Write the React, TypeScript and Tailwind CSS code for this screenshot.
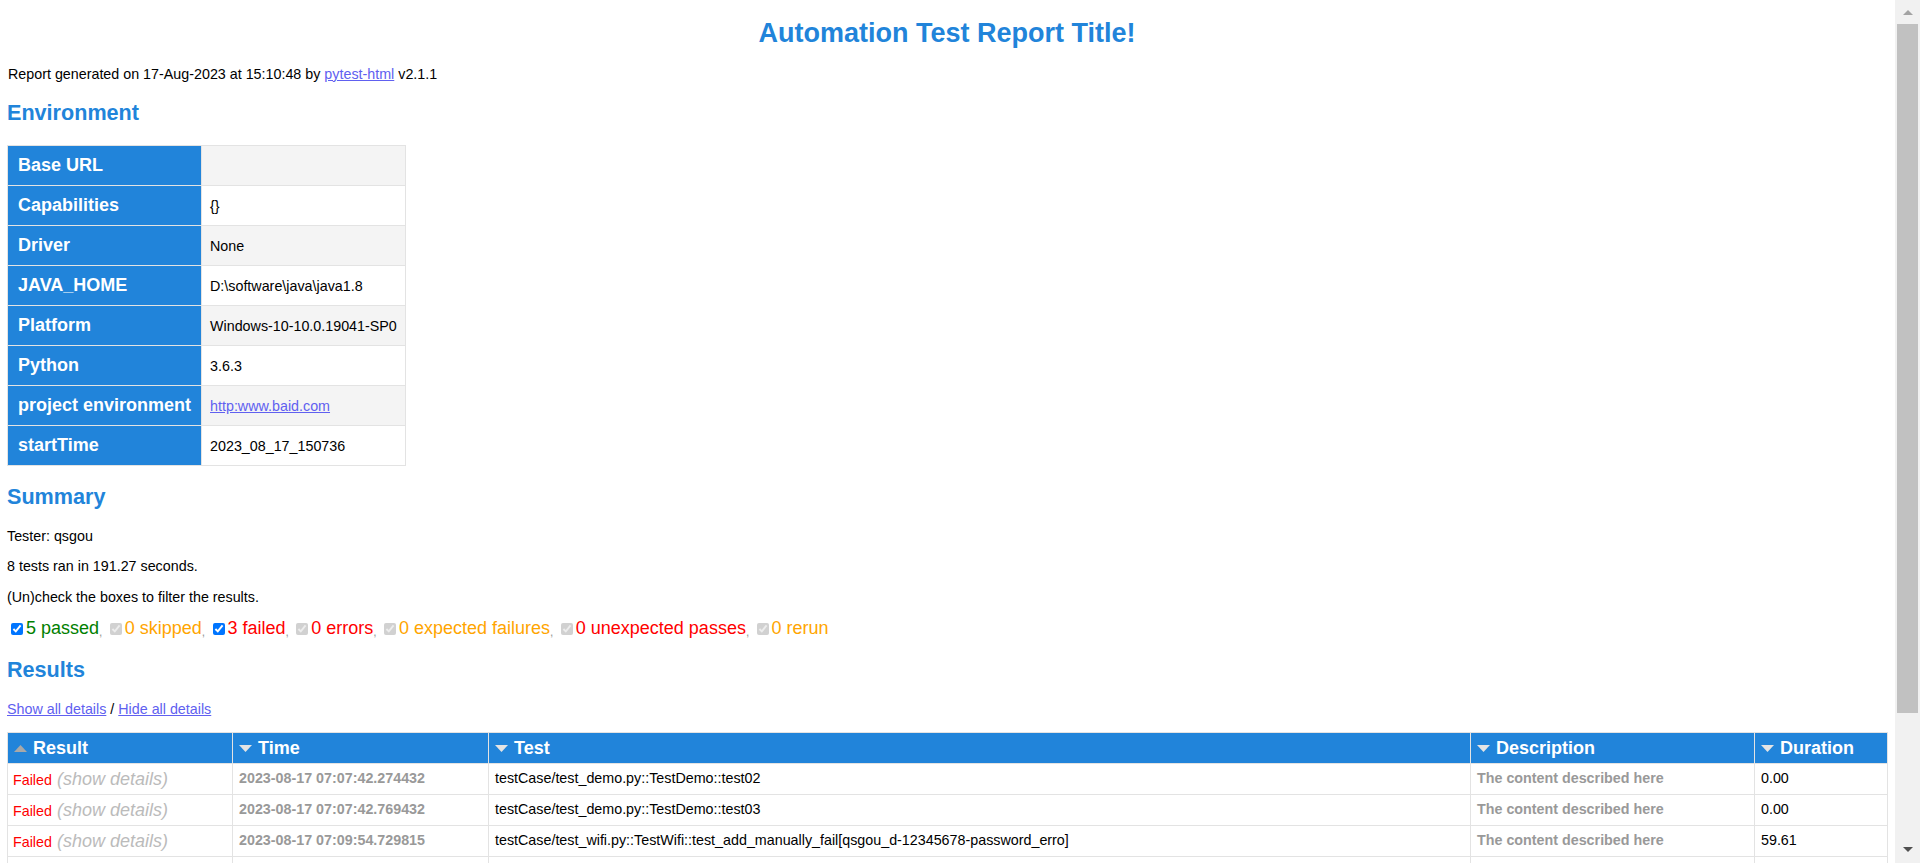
import type { ReactNode } from "react";

type EnvRow = { key: string; value: ReactNode };

type Filter = { count: number; label: string; color: string; on: boolean };

type TestRow = {
  result: "Failed" | "Passed";
  time: string;
  test: string;
  description: string;
  duration: string;
};

const linkCls = "text-[#6060f0] underline";

const environment: EnvRow[] = [
  { key: "Base URL", value: "" },
  { key: "Capabilities", value: "{}" },
  { key: "Driver", value: "None" },
  { key: "JAVA_HOME", value: "D:\\software\\java\\java1.8" },
  { key: "Platform", value: "Windows-10-10.0.19041-SP0" },
  { key: "Python", value: "3.6.3" },
  {
    key: "project environment",
    value: (
      <a href="#" className={linkCls}>
        http:www.baid.com
      </a>
    ),
  },
  { key: "startTime", value: "2023_08_17_150736" },
];

const filters: Filter[] = [
  { count: 5, label: "passed", color: "text-[#008000]", on: true },
  { count: 0, label: "skipped", color: "text-[#ffa500]", on: false },
  { count: 3, label: "failed", color: "text-[#ff0000]", on: true },
  { count: 0, label: "errors", color: "text-[#ff0000]", on: false },
  { count: 0, label: "expected failures", color: "text-[#ffa500]", on: false },
  { count: 0, label: "unexpected passes", color: "text-[#ff0000]", on: false },
  { count: 0, label: "rerun", color: "text-[#ffa500]", on: false },
];

const desc = "The content described here";

const tests: TestRow[] = [
  { result: "Failed", time: "2023-08-17 07:07:42.274432", test: "testCase/test_demo.py::TestDemo::test02", description: desc, duration: "0.00" },
  { result: "Failed", time: "2023-08-17 07:07:42.769432", test: "testCase/test_demo.py::TestDemo::test03", description: desc, duration: "0.00" },
  { result: "Failed", time: "2023-08-17 07:09:54.729815", test: "testCase/test_wifi.py::TestWifi::test_add_manually_fail[qsgou_d-12345678-password_erro]", description: desc, duration: "59.61" },
  { result: "Passed", time: "2023-08-17 07:07:41.803112", test: "testCase/test_demo.py::TestDemo::test01", description: desc, duration: "0.00" },
  { result: "Passed", time: "2023-08-17 07:07:43.102540", test: "testCase/test_demo.py::TestDemo::test04", description: desc, duration: "0.00" },
  { result: "Passed", time: "2023-08-17 07:08:21.554310", test: "testCase/test_wifi.py::TestWifi::test_open_wifi", description: desc, duration: "38.42" },
  { result: "Passed", time: "2023-08-17 07:08:52.918004", test: "testCase/test_wifi.py::TestWifi::test_scan_wifi", description: desc, duration: "31.36" },
  { result: "Passed", time: "2023-08-17 07:10:47.330981", test: "testCase/test_wifi.py::TestWifi::test_add_manually[qsgou_d-12345678]", description: desc, duration: "52.60" },
];

const columns = [
  { label: "Result", w: "w-[225px]", asc: true },
  { label: "Time", w: "w-[256px]", asc: false },
  { label: "Test", w: "w-[982px]", asc: false },
  { label: "Description", w: "w-[284px]", asc: false },
  { label: "Duration", w: "w-[133px]", asc: false },
];

// petit triangle de tri dans l'en-tête
function SortArrow({ asc }: { asc: boolean }) {
  return (
    <svg width="13" height="7" viewBox="0 0 13 7" className="shrink-0">
      {asc ? (
        <polygon points="0,7 6.5,0 13,7" fill="#a8a8a8" />
      ) : (
        <polygon points="0,0 13,0 6.5,7" fill="#e4e4e4" />
      )}
    </svg>
  );
}

function Heading({ children, className }: { children: ReactNode; className: string }) {
  return (
    <h2 className={`h-[25px] flex items-center text-[21.6px] font-bold text-[#2184da] ${className}`}>
      {children}
    </h2>
  );
}

function Line({ children, className }: { children: ReactNode; className: string }) {
  return <p className={`h-[17px] flex items-center text-[14.3px] text-black ${className}`}>{children}</p>;
}

function Scrollbar() {
  return (
    <div className="w-[25px] shrink-0 h-full bg-[#f1f1f1] flex flex-col items-center">
      <div className="h-[24px] flex items-center justify-center">
        <svg width="10" height="5" viewBox="0 0 10 5">
          <polygon points="0,5 5,0 10,5" fill="#a3a3a3" />
        </svg>
      </div>
      <div className="w-[21px] h-[689px] bg-[#c1c1c1]" />
      <div className="flex-1" />
      <div className="h-[27px] flex items-center justify-center">
        <svg width="10" height="5" viewBox="0 0 10 5">
          <polygon points="0,0 10,0 5,5" fill="#505050" />
        </svg>
      </div>
    </div>
  );
}

export default function App() {
  return (
    <div className="flex h-[863px] overflow-hidden bg-white font-['Liberation_Sans',Arial,sans-serif]">
      <main className="flex-1 min-w-0 pl-[7px] pr-[8px]">
        {/* Titre */}
        <h1 className="mt-[17px] h-[32px] flex items-center justify-center text-[27px] font-bold text-[#2184da]">
          Automation Test Report Title!
        </h1>

        <Line className="mt-[17px] pl-px">
          Report generated on 17-Aug-2023 at 15:10:48 by&nbsp;
          <a href="#" className={linkCls}>
            pytest-html
          </a>
          &nbsp;v2.1.1
        </Line>

        {/* Environment */}
        <Heading className="mt-[18px]">Environment</Heading>
        <table className="mt-[19px] border-collapse">
          <tbody>
            {environment.map((row, i) => (
              <tr key={row.key} className="h-[40px]">
                <td className="border border-[#e3e3e3] bg-[#2184da] px-[10px] text-[18px] font-bold text-white whitespace-nowrap">
                  {row.key}
                </td>
                <td
                  className={`border border-[#e3e3e3] pl-[8px] pr-[8px] pt-[3px] text-[14.3px] text-black whitespace-nowrap ${
                    i % 2 === 0 ? "bg-[#f4f4f4]" : "bg-white"
                  }`}
                >
                  {row.value}
                </td>
              </tr>
            ))}
          </tbody>
        </table>

        {/* Summary */}
        <Heading className="mt-[19px]">Summary</Heading>
        <Line className="mt-[18px]">Tester: qsgou</Line>
        <Line className="mt-[13px]">8 tests ran in 191.27 seconds.</Line>
        <Line className="mt-[14px]">(Un)check the boxes to filter the results.</Line>

        <div className="mt-[12px] h-[21px] flex items-center whitespace-pre">
          {filters.map((f, i) => (
            <span key={f.label} className="flex items-center">
              <input
                type="checkbox"
                checked
                readOnly
                disabled={!f.on}
                className="w-[12px] h-[12px] ml-[4px] mr-[3px]"
              />
              <span className={`text-[18px] ${f.color}`}>
                {f.count} {f.label}
              </span>
              {i < filters.length - 1 && (
                <span className="text-[12px] text-[#999] self-end mb-[1px]">, </span>
              )}
            </span>
          ))}
        </div>

        {/* Results */}
        <Heading className="mt-[19px]">Results</Heading>
        <Line className="mt-[18px]">
          <a href="#" className={linkCls}>
            Show all details
          </a>
          &nbsp;/&nbsp;
          <a href="#" className={linkCls}>
            Hide all details
          </a>
        </Line>

        <table className="mt-[14px] w-[1880px] table-fixed border-collapse">
          <colgroup>
            {columns.map((c) => (
              <col key={c.label} className={c.w} />
            ))}
          </colgroup>
          <thead>
            <tr className="h-[31px] bg-[#2184da]">
              {columns.map((c) => (
                <th key={c.label} className="border border-[#e3e3e3] p-0 pl-[6px] text-left">
                  <div className="flex items-center gap-[6px] text-[18px] font-bold text-white">
                    <SortArrow asc={c.asc} />
                    {c.label}
                  </div>
                </th>
              ))}
            </tr>
          </thead>
          <tbody>
            {tests.map((t) => (
              <tr key={t.time} className="h-[31px] text-[14.3px]">
                <td className="border border-[#e3e3e3] pl-[5px] whitespace-nowrap">
                  <span className={t.result === "Failed" ? "text-[#ff0000]" : "text-[#008000]"}>{t.result}</span>
                  <span className="text-[18px] italic text-[#bbbbbb]"> (show details)</span>
                </td>
                <td className="border border-[#e3e3e3] pl-[6px] font-bold text-[#999]">{t.time}</td>
                <td className="border border-[#e3e3e3] pl-[6px] text-black whitespace-nowrap">{t.test}</td>
                <td className="border border-[#e3e3e3] pl-[6px] font-bold text-[#999]">{t.description}</td>
                <td className="border border-[#e3e3e3] pl-[6px] text-black">{t.duration}</td>
              </tr>
            ))}
          </tbody>
        </table>
      </main>
      <Scrollbar />
    </div>
  );
}
